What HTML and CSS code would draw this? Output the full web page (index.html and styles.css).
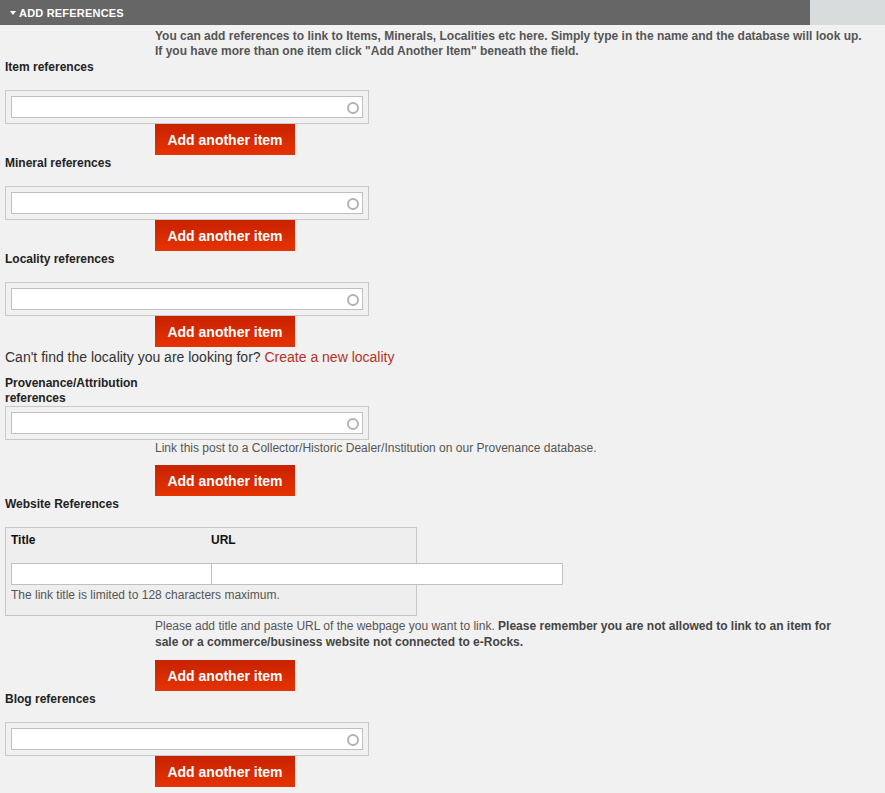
FILE: index.html
```html
<!DOCTYPE html>
<html lang="en">
<head>
    <meta charset="UTF-8">
    <title>Add References</title>
    <link rel="stylesheet" href="styles.css">
</head>
<body>
    <div class="topbar">
        <div class="panel-head"><span class="arrow"></span>ADD REFERENCES</div>
        <div class="panel-tail"></div>
    </div>

    <div class="content">
        <p class="intro">You can add references to link to Items, Minerals, Localities etc here. Simply type in the name and the database will look up.<br>If you have more than one item click "Add Another Item" beneath the field.</p>

        <!-- Items -->
        <label class="field-label">Item references</label>
        <div class="ref-field">
            <input type="text" class="ref-input">
            <svg class="spin" width="12" height="12" viewBox="0 0 12 12"><circle cx="6" cy="6" r="5" fill="none" stroke="#b3b3b3" stroke-width="2"/></svg>
        </div>
        <button class="add-btn">Add another item</button>

        <!-- Minerals -->
        <label class="field-label">Mineral references</label>
        <div class="ref-field">
            <input type="text" class="ref-input">
            <svg class="spin" width="12" height="12" viewBox="0 0 12 12"><circle cx="6" cy="6" r="5" fill="none" stroke="#b3b3b3" stroke-width="2"/></svg>
        </div>
        <button class="add-btn">Add another item</button>

        <!-- Localities -->
        <label class="field-label">Locality references</label>
        <div class="ref-field">
            <input type="text" class="ref-input">
            <svg class="spin" width="12" height="12" viewBox="0 0 12 12"><circle cx="6" cy="6" r="5" fill="none" stroke="#b3b3b3" stroke-width="2"/></svg>
        </div>
        <button class="add-btn">Add another item</button>
        <p class="locality-note">Can't find the locality you are looking for? <a href="#">Create a new locality</a></p>

        <!-- Provenance -->
        <label class="field-label">Provenance/Attribution references</label>
        <div class="ref-field">
            <input type="text" class="ref-input">
            <svg class="spin" width="12" height="12" viewBox="0 0 12 12"><circle cx="6" cy="6" r="5" fill="none" stroke="#b3b3b3" stroke-width="2"/></svg>
        </div>
        <p class="help help-prov">Link this post to a Collector/Historic Dealer/Institution on our Provenance database.</p>
        <button class="add-btn btn-spaced">Add another item</button>

        <!-- Websites -->
        <label class="field-label">Website References</label>
        <div class="web-box">
            <div class="web-cols">
                <span>Title</span>
                <span>URL</span>
            </div>
            <div class="web-inputs">
                <input type="text" class="web-title">
                <input type="text" class="web-url">
            </div>
            <p class="web-help">The link title is limited to 128 characters maximum.</p>
        </div>
        <p class="help help-web">Please add title and paste URL of the webpage you want to link. <b>Please remember you are not allowed to link to an item for sale or a commerce/business website not connected to e-Rocks.</b></p>
        <button class="add-btn btn-spaced">Add another item</button>

        <!-- Blogs -->
        <label class="field-label">Blog references</label>
        <div class="ref-field">
            <input type="text" class="ref-input">
            <svg class="spin" width="12" height="12" viewBox="0 0 12 12"><circle cx="6" cy="6" r="5" fill="none" stroke="#b3b3b3" stroke-width="2"/></svg>
        </div>
        <button class="add-btn">Add another item</button>
    </div>
</body>
</html>
```

FILE: styles.css
```css
body {
    margin: 0;
    background: #f1f1f1;
    font-family: 'Liberation Sans', Arial, sans-serif;
    font-size: 12px;
    color: #222;
}
.topbar {
    display: flex;
    height: 25px;
}
.panel-head {
    width: 810px;
    background: #666666;
    color: #fff;
    font-weight: bold;
    font-size: 11px;
    letter-spacing: 0.2px;
    display: flex;
    align-items: center;
    padding-left: 10px;
    box-sizing: border-box;
}
.arrow {
    width: 0;
    height: 0;
    border-left: 3.5px solid transparent;
    border-right: 3.5px solid transparent;
    border-top: 4px solid #fff;
    margin-right: 3px;
}
.panel-tail {
    flex: 1;
    background: #d9dcdd;
}
.content {
    padding: 0 0 0 5px;
}
.intro {
    margin: 0 0 0 150px;
    padding-top: 4px;
    font-weight: bold;
    line-height: 15px;
    color: #555;
}
.field-label {
    display: block;
    width: 150px;
    padding-top: 1px;
    min-height: 30px;
    font-weight: bold;
    line-height: 15px;
    color: #222;
}
.ref-field {
    position: relative;
    width: 364px;
    height: 34px;
    box-sizing: border-box;
    border: 1px solid #c8c8c8;
    padding: 5px;
}
.ref-input {
    display: block;
    width: 352px;
    height: 22px;
    box-sizing: border-box;
    margin: 0;
    border: 1px solid #c0c0c0;
    background: #fff;
    padding: 0 20px 0 4px;
}
.spin {
    position: absolute;
    right: 9px;
    top: 11px;
}
.add-btn {
    display: block;
    margin: 0 0 0 150px;
    width: 140px;
    height: 31px;
    padding: 0;
    border: none;
    background: linear-gradient(#c92200, #e53300);
    color: #fff;
    font-family: 'Liberation Sans', Arial, sans-serif;
    font-size: 14px;
    font-weight: bold;
    cursor: pointer;
}
.btn-spaced {
    margin-top: 9px;
}
.locality-note {
    margin: 0 0 8px 0;
    font-size: 14px;
    line-height: 20px;
    color: #333;
}
.locality-note a {
    color: #b5321f;
    text-decoration: none;
}
.help {
    margin: 0 0 0 150px;
    color: #555;
}
.help-prov {
    margin-top: 1px;
    line-height: 15px;
}
.help-web {
    width: 690px;
    margin-top: 2px;
    line-height: 16px;
}
.help-web b {
    color: #444;
}
.help-web + .btn-spaced {
    margin-top: 10px;
}
.web-box {
    width: 412px;
    box-sizing: border-box;
    background: #eeeeee;
    border: 1px solid #c6c6c6;
    padding: 5px 5px 12px;
}
.web-cols {
    display: grid;
    grid-template-columns: 200px 1fr;
    height: 30px;
    font-weight: bold;
    line-height: 15px;
    color: #111;
}
.web-inputs {
    display: flex;
}
.web-inputs input {
    flex-shrink: 0;
    height: 22px;
    box-sizing: border-box;
    margin: 0;
    border: 1px solid #c0c0c0;
    background: #fff;
}
.web-title {
    width: 201px;
}
.web-url {
    width: 352px;
    margin-left: -1px !important;
}
.web-help {
    margin: 2px 0 0;
    line-height: 16px;
    color: #555;
}
```
